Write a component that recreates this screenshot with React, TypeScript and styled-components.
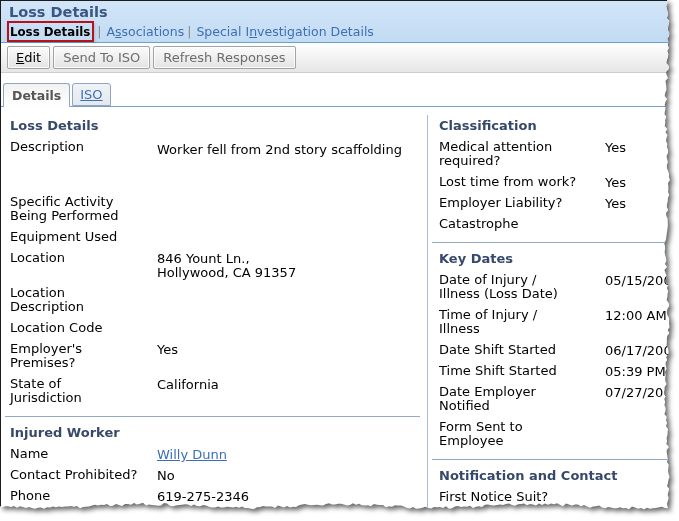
import React from "react";
import styled, { createGlobalStyle } from "styled-components";

const GlobalStyle = createGlobalStyle`
  html, body { margin: 0; padding: 0; background: #ffffff; }
  body { font-family: "DejaVu Sans", Verdana, sans-serif; font-size: 13px; color: #000; }
  #root { width: 679px; height: 521px; overflow: hidden; }
`;

const Stage = styled.div`
  width: 679px;
  height: 521px;
  filter: drop-shadow(3px 3px 2.5px rgba(0, 0, 0, 0.6));
`;

const Frame = styled.div`
  width: 679px;
  height: 521px;
  box-sizing: border-box;
  background: #ffffff;
  border-top: 1px solid #1c1c1c;
  border-left: 1px solid #1c1c1c;
  display: flex;
  flex-direction: column;
  overflow: hidden;
`;

const Header = styled.div`
  background: linear-gradient(#d2e5f8, #c2dbf3);
  border-bottom: 1px solid #62a4d6;
  padding: 3px 0 0 8px;
  display: flex;
  flex-direction: column;
`;

const Title = styled.div`
  font-size: 14.5px;
  font-weight: bold;
  line-height: 17px;
  color: #3a5783;
`;

const SubNav = styled.div`
  display: flex;
  align-items: center;
  height: 21px;
  margin-left: -2px;
  font-size: 12.5px;
`;

const SubCurrent = styled.span`
  box-sizing: border-box;
  height: 21px;
  display: flex;
  align-items: center;
  padding: 0 2px 0 1px;
  border: 2px solid #b5121b;
  font-size: 11.8px;
  font-weight: bold;
  color: #000;
  box-shadow: 1px 2px 3px rgba(0, 0, 0, 0.15);
`;

const SubSep = styled.span`
  color: #8a8a8a;
  margin: 0 5px 0 3px;
`;

const SubLink = styled.span`
  color: #3e70b4;
  u { text-decoration: underline; }
`;

const Toolbar = styled.div`
  display: flex;
  gap: 3px;
  padding: 3px 0 3px 6px;
  background: linear-gradient(#ffffff, #e6e6e6);
  border-bottom: 1px solid #cccccc;
`;

const ToolButton = styled.button<{ $disabled?: boolean }>`
  height: 23px;
  box-sizing: border-box;
  padding: 0 ${(p) => (p.$disabled ? "9px" : "8px")};
  border: 1px solid #a3a3a3;
  border-radius: 2px;
  background: linear-gradient(#fbfbfb, #e3e3e3);
  box-shadow: inset 0 0 0 1px rgba(255, 255, 255, 0.8);
  font-family: "DejaVu Sans", Verdana, sans-serif;
  font-size: 13px;
  color: ${(p) => (p.$disabled ? "#6d6d6d" : "#000")};
  u { text-decoration: underline; }
`;

const TabStrip = styled.div`
  display: flex;
  align-items: flex-end;
  gap: 2px;
  margin-top: 10px;
  padding-left: 2px;
  border-bottom: 1px solid #7f9dc0;
  height: 23px;
`;

const Tab = styled.div<{ $active?: boolean }>`
  box-sizing: border-box;
  height: ${(p) => (p.$active ? "24px" : "23px")};
  margin-bottom: ${(p) => (p.$active ? "-1px" : "0")};
  display: flex;
  align-items: center;
  padding: 0 ${(p) => (p.$active ? "8px" : "7px")};
  border: 1px solid #8ea6c2;
  border-bottom: ${(p) => (p.$active ? "none" : "1px solid #8ea6c2")};
  border-radius: 3px 3px 0 0;
  background: ${(p) => (p.$active ? "linear-gradient(#f2f2f2, #ffffff)" : "linear-gradient(#f0f3f7, #e3e9ef)")};
  font-weight: ${(p) => (p.$active ? "bold" : "normal")};
  color: ${(p) => (p.$active ? "#555555" : "#3e70b4")};
  text-decoration: ${(p) => (p.$active ? "none" : "underline")};
  font-size: ${(p) => (p.$active ? "12.5px" : "13px")};
`;

const Columns = styled.div`
  display: grid;
  grid-template-columns: 427px 1fr;
  margin-top: 8px;
  flex: 1;
`;

const Column = styled.div<{ $side: "left" | "right" }>`
  padding: ${(p) => (p.$side === "left" ? "0 7px 0 4px" : "0 0 0 4px")};
  border-right: ${(p) => (p.$side === "left" ? "1px solid #a8bdd3" : "none")};
`;

const Section = styled.div<{ $inset: number }>`
  padding: 5px 0 8px ${(p) => p.$inset}px;
  border-bottom: 1px solid #91abc7;
  &:first-child { padding-top: 0; }
`;

const SectionTitle = styled.div`
  font-size: 13px;
  font-weight: bold;
  color: #36496b;
  line-height: 14px;
  padding: 4px 0 3px;
`;

const Row = styled.div<{ $labelWidth: number }>`
  display: grid;
  grid-template-columns: ${(p) => p.$labelWidth}px 1fr;
  padding: 4px 0 3px;
  line-height: 14px;
  white-space: nowrap;
`;

const Label = styled.div`
  color: #000;
`;

const Value = styled.div<{ $tall?: boolean }>`
  color: #000;
  padding-top: ${(p) => (p.$tall ? "3px" : "1px")};
  margin-bottom: ${(p) => (p.$tall ? "0" : "-1px")};
  min-height: ${(p) => (p.$tall ? "45px" : "0")};
`;

const Link = styled.span`
  color: #3a6fb7;
  text-decoration: underline;
`;

type Item = { label: React.ReactNode; value?: React.ReactNode; tall?: boolean };

const leftLoss: Item[] = [
  { label: "Description", value: "Worker fell from 2nd story scaffolding", tall: true },
  { label: <>Specific Activity<br />Being Performed</> },
  { label: "Equipment Used" },
  { label: "Location", value: <>846 Yount Ln.,<br />Hollywood, CA 91357</> },
  { label: <>Location<br />Description</> },
  { label: "Location Code" },
  { label: <>Employer's<br />Premises?</>, value: "Yes" },
  { label: <>State of<br />Jurisdiction</>, value: "California" },
];

const leftWorker: Item[] = [
  { label: "Name", value: <Link>Willy Dunn</Link> },
  { label: "Contact Prohibited?", value: "No" },
  { label: "Phone", value: "619-275-2346" },
];

const rightClass: Item[] = [
  { label: <>Medical attention<br />required?</>, value: "Yes" },
  { label: "Lost time from work?", value: "Yes" },
  { label: "Employer Liability?", value: "Yes" },
  { label: "Catastrophe" },
];

const rightDates: Item[] = [
  { label: <>Date of Injury /<br />Illness (Loss Date)</>, value: "05/15/2008" },
  { label: <>Time of Injury /<br />Illness</>, value: "12:00 AM" },
  { label: "Date Shift Started", value: "06/17/2008" },
  { label: "Time Shift Started", value: "05:39 PM" },
  { label: <>Date Employer<br />Notified</>, value: "07/27/2008" },
  { label: <>Form Sent to<br />Employee</> },
];

const rightNotice: Item[] = [
  { label: "First Notice Suit?" },
];

function Block({ title, items, labelWidth, inset }: { title: string; items: Item[]; labelWidth: number; inset: number }) {
  return (
    <Section $inset={inset}>
      <SectionTitle>{title}</SectionTitle>
      {items.map((it, i) => (
        <Row key={i} $labelWidth={labelWidth}>
          <Label>{it.label}</Label>
          <Value $tall={it.tall}>{it.value}</Value>
        </Row>
      ))}
    </Section>
  );
}

function tornClip(): string {
  let seed = 7;
  const rnd = () => {
    seed = (seed * 9301 + 49297) % 233280;
    return seed / 233280;
  };
  const pts: string[] = [];
  const bottom = 506;
  pts.push("0px 0px");
  for (let y = 0; y <= bottom; y += 3) {
    const x = 667 + Math.sin(y / 23) * 1.5 + (rnd() - 0.5) * 3;
    pts.push(`${x.toFixed(1)}px ${y}px`);
  }
  for (let x = 668; x >= 0; x -= 3) {
    const y = bottom + Math.sin(x / 31) * 1.8 + (rnd() - 0.5) * 3;
    pts.push(`${x}px ${y.toFixed(1)}px`);
  }
  pts.push(`0px ${bottom}px`);
  return `polygon(${pts.join(", ")})`;
}

export default function App() {
  const clip = React.useMemo(tornClip, []);
  return (
    <>
      <GlobalStyle />
      <Stage>
        <Frame style={{ clipPath: clip }}>
          <Header>
            <Title>Loss Details</Title>
            <SubNav>
              <SubCurrent>Loss Details</SubCurrent>
              <SubSep>|</SubSep>
              <SubLink>A<u>s</u>sociations</SubLink>
              <SubSep>|</SubSep>
              <SubLink>Special I<u>n</u>vestigation Details</SubLink>
            </SubNav>
          </Header>
          <Toolbar>
            <ToolButton><u>E</u>dit</ToolButton>
            <ToolButton $disabled>Send To ISO</ToolButton>
            <ToolButton $disabled>Refresh Responses</ToolButton>
          </Toolbar>
          <TabStrip>
            <Tab $active>Details</Tab>
            <Tab>ISO</Tab>
          </TabStrip>
          <Columns>
            <Column $side="left">
              <Block title="Loss Details" items={leftLoss} labelWidth={147} inset={5} />
              <Block title="Injured Worker" items={leftWorker} labelWidth={147} inset={5} />
            </Column>
            <Column $side="right">
              <Block title="Classification" items={rightClass} labelWidth={166} inset={7} />
              <Block title="Key Dates" items={rightDates} labelWidth={166} inset={7} />
              <Block title="Notification and Contact" items={rightNotice} labelWidth={166} inset={7} />
            </Column>
          </Columns>
        </Frame>
      </Stage>
    </>
  );
}
